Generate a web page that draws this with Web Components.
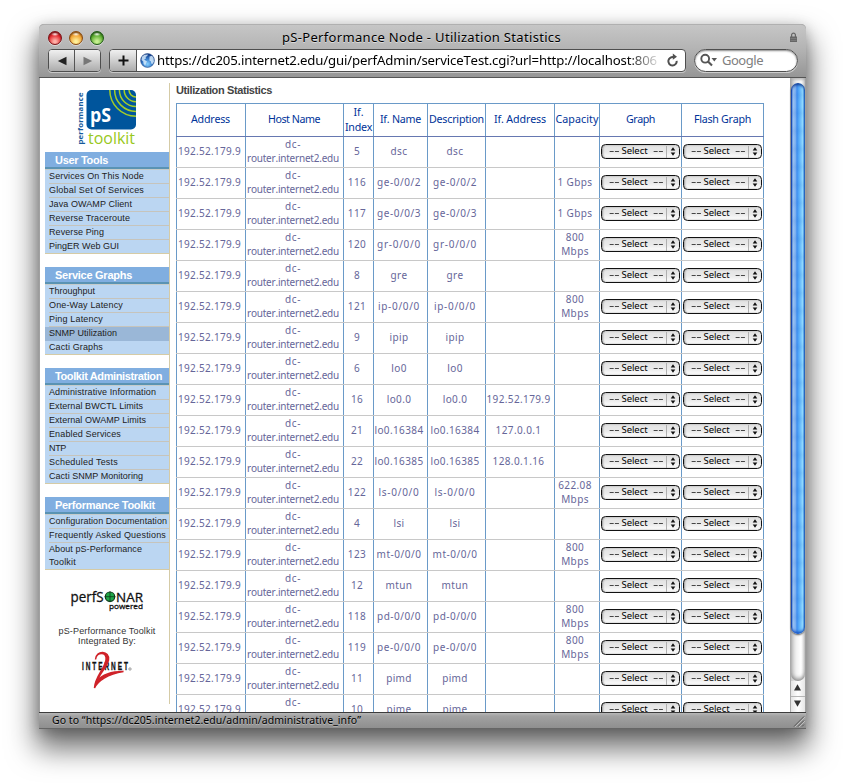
<!DOCTYPE html>
<html lang="en">
<head>
<meta charset="utf-8">
<title>pS-Performance Node - Utilization Statistics</title>
<style>
html,body{margin:0;height:783px;overflow:hidden;background:#fff}
body{box-sizing:border-box;padding:24px 0 0 39px;font-family:"Noto Sans","Open Sans",sans-serif;font-kerning:none}
</style>
</head>
<body>
<mac-window>
  <browser-chrome slot="chrome"></browser-chrome>
  <side-bar slot="page"></side-bar>
  <stat-table slot="page"></stat-table>
  <mac-scrollbar slot="scroll"></mac-scrollbar>
  <status-line slot="status"></status-line>
</mac-window>
<script>
class Base extends HTMLElement{
  constructor(){super();this.attachShadow({mode:'open'});}
  connectedCallback(){if(!this.done){this.done=true;this.shadowRoot.innerHTML=this.view();this.ready();}}
  view(){return '';}
  ready(){}
}
const def=(n,c)=>customElements.define(n,c);

def('mac-window',class extends Base{
  view(){return `<style>
  :host{display:flex;flex-direction:column;box-sizing:border-box;width:767px;height:705px;border-radius:5px 5px 0 0;background:#a0a0a0;
    box-shadow:0 17px 29px 3px rgba(0,0,0,.56),0 3px 13px rgba(0,0,0,.22)}
  .mid{display:flex;height:634px;margin:0 1px;background:#fff;overflow:hidden}
  .page{display:flex;align-items:flex-start;width:750px;overflow:hidden}
  </style><slot name="chrome"></slot><div class="mid"><div class="page"><slot name="page"></slot></div><slot name="scroll"></slot></div><slot name="status"></slot>`;}
});

def('traffic-light',class extends Base{
  view(){const [a,b,c]=this.getAttribute('tones').split(' ');return `<style>
  :host{display:block;width:14px;height:14px;box-sizing:border-box;border-radius:50%;border:1px solid ${c};
  background:radial-gradient(ellipse 4px 2px at 50% 18%,rgba(255,255,255,.95),rgba(255,255,255,0)),radial-gradient(circle at 50% 80%,${a} 10%,${b} 60%,${c} 105%);
  box-shadow:0 1px 0 rgba(255,255,255,.5),inset 0 1px 1px rgba(0,0,0,.35)}</style>`;}
});

def('browser-chrome',class extends Base{
  view(){return `<style>
  :host{display:block;box-sizing:border-box;height:54px;border-bottom:1px solid #555;border-top:1px solid #b0b0b0;border-radius:5px 5px 0 0;
    background:linear-gradient(#c6c6c6,#b4b4b4 45%,#969696)}
  .title{display:grid;grid-template-columns:243px 1fr 28px;align-items:center;height:24px}
  .lights{display:flex;gap:7px;padding-left:9px;margin-top:-2px}
  .title fit-text{font-size:13px;line-height:20px;color:#000;text-shadow:0 1px 0 rgba(255,255,255,.5);margin-bottom:5px}
  .bar{display:flex;align-items:flex-start;padding-left:9px;height:24px}
  .box{box-sizing:border-box;height:23px;border:1px solid #4e4e4e;display:flex;overflow:hidden;background:#fff;box-shadow:0 1px 0 rgba(255,255,255,.45)}
  .nav{width:53px;border-radius:4px;margin-right:8px}
  .b{flex:1;background:linear-gradient(#f0f0f0,#cfcfcf 50%,#acacac);display:flex;align-items:center;justify-content:center}
  .b+.b{border-left:1px solid #555}
  .url{width:577px;border-radius:4px;margin-right:8px}
  .plus{flex:0 0 26px;border-right:1px solid #555}
  .globe{margin:3px 0 0 3px;width:15px;flex:none}
  .addr{margin-left:2px;width:500px;overflow:hidden;font-size:13.200px;line-height:20px;color:#000;-webkit-mask-image:linear-gradient(90deg,#000 470px,rgba(0,0,0,.15) 500px)}
  .rel{margin:3px 0 0 9px}
  .search{width:104px;border-radius:12px;box-shadow:inset 0 1px 2px #888,0 1px 0 rgba(255,255,255,.5);color:#808080;font-size:13px;line-height:20px}
  .search svg{margin:3px 4px 0 5px;flex:none}
  </style>
  <div class="title"><div class="lights">
   <traffic-light tones="#ffb0a8 #e0262c #7c1216"></traffic-light><traffic-light tones="#fff09a #f0a030 #8a4a10"></traffic-light><traffic-light tones="#c6f090 #58a82c #1f5a14"></traffic-light></div>
   <div><fit-text w="279">pS-Performance Node - Utilization Statistics</fit-text></div>
   <svg width="10" height="12" viewBox="0 0 10 12" style="margin:-3px 0 0 11px"><path d="M2.600 6V3.600a2 2 0 0 1 3.800 0V6" fill="none" stroke="#666" stroke-width="1.200"/><rect x="1" y="5.500" width="7" height="5.500" fill="#666"/><path d="M1.500 7.500h6M1.500 9.500h6" stroke="#888" stroke-width=".6"/></svg></div>
  <div class="bar">
   <div class="box nav"><div class="b"><svg width="10" height="10"><path d="M9.500.7v8.600L.8 5z" fill="#222"/></svg></div><div class="b"><svg width="10" height="10"><path d="M.5.7v8.600L9.200 5z" fill="#777"/></svg></div></div>
   <div class="box url"><div class="b plus"><svg width="11" height="11"><path d="M5.500.5v10M.5 5.500h10" stroke="#111" stroke-width="2"/></svg></div>
    <svg class="globe" width="15" height="15" viewBox="0 0 15 15"><defs><radialGradient id="g" cx=".5" cy=".75" r=".7"><stop offset="0" stop-color="#86d0ff"/><stop offset=".55" stop-color="#3478c8"/><stop offset="1" stop-color="#123a86"/></radialGradient></defs><circle cx="7.500" cy="7.500" r="6.900" fill="url(#g)" stroke="#2c4f88" stroke-width=".6"/><path d="M2 3.800 4.500 1.800 8 1.500 7.200 3 5.500 4 6.200 5.200 4.200 6.500 5.500 7.500 7 8.500 6 10.500 5.200 12.800 3.500 10.500 3.300 8.500 1.500 7zM9.500 3.500l2.500-.8 1.600 2.500.3 3.500-1.500 2.200-1.200-.5-.2-2-1.600-1z" fill="#d5eafa" opacity=".85"/></svg>
    <div class="addr"><fit-text w="500">https://dc205.internet2.edu/gui/perfAdmin/serviceTest.cgi?url=http://localhost:806</fit-text></div>
    <svg class="rel" width="13" height="15" viewBox="0 0 13 15"><path d="M8 4.300A4.200 4.200 0 1 0 10.700 7.800" fill="none" stroke="#505050" stroke-width="2"/><path d="M6.800.6 11 3.700 6.800 6.800z" fill="#505050"/></svg></div>
   <div class="box search"><svg width="18" height="15" viewBox="0 0 18 15"><circle cx="5.200" cy="5.700" r="3.900" fill="none" stroke="#555" stroke-width="1.900"/><path d="m8 8.500 4 4" stroke="#555" stroke-width="2.200"/><path d="M11.500 5H17l-2.700 3.600z" fill="#555"/></svg><fit-text w="41">Google</fit-text></div>
  </div>`;}
});

def('status-line',class extends Base{
  view(){return `<style>:host{display:flex;justify-content:space-between;box-sizing:border-box;height:17px;padding-left:13px;border-top:1px solid #3c3c3c;border-bottom:1px solid #666;background:linear-gradient(#b8b8b8,#a2a2a2 3px,#8f8f8f);font-size:10.500px;line-height:14px;color:#000;text-shadow:0 1px 0 rgba(255,255,255,.35)}svg{margin:2px 1px 0 0}</style>
  <div><fit-text w="309">Go to “https://dc205.internet2.edu/admin/administrative_info”</fit-text></div><svg width="12" height="12"><path d="M1 11.500 11 1.500M5 11.500l6-6M9 11.500l2-2" stroke="#555"/><path d="M2 12 12 2M6 12l6-6" stroke="#d0d0d0" stroke-width=".7"/></svg>`;}
});

def('mac-scrollbar',class extends Base{
  view(){return `<style>
  :host{display:flex;flex-direction:column;box-sizing:border-box;width:15px;height:634px;border-left:1px solid #aaa;background:linear-gradient(90deg,#c8c8c8,#f2f2f2 40%,#fff 70%,#e2e2e2)}
  .well{height:603px;box-sizing:border-box;padding-top:5px;border-radius:0 0 7px 7px;box-shadow:inset 0 -3px 4px -1px #888,inset 0 2px 3px #bbb}
  .thumb{height:551px;border-radius:7px;background:
   repeating-linear-gradient(rgba(0,50,160,0) 0 6px,rgba(20,90,200,.09) 12px,rgba(0,50,160,0) 18px),
   linear-gradient(90deg,#1440a8 0,#2a62d0 8%,#a2c6f2 12%,#78aef0 34%,#3f8ef0 42%,#5cb2fb 60%,#93dafe 84%,#4a98e2 93%,#164ea8 100%);
   box-shadow:inset 0 3px 3px -1px #103890,inset 0 -3px 3px -1px #1450c0,0 1px 2px #555}
  .a{flex:1;display:flex;align-items:center;justify-content:center;background:linear-gradient(90deg,#e4e4e4,#fff 50%,#e6e6e6)}.a+.a{border-top:1px solid #b5b5b5}.a svg{margin-bottom:2px}
  </style><div class="well"><div class="thumb"></div></div><div class="a"><svg width="8" height="7"><path d="M0 6.500 3.500.3 7 6.500z" fill="#333"/></svg></div><div class="a"><svg width="8" height="7"><path d="M0 .5 3.500 6.700 7 .5z" fill="#333"/></svg></div>`;}
});

def('nav-item',class extends Base{
  view(){return `<style>:host{display:block;box-sizing:border-box;height:14px;padding-left:4px;background:#bbd6f2;font:9px/12px "Liberation Sans",Arial,sans-serif;color:#222}
  div{height:13px;border-bottom:1px solid #c6c4bc;white-space:nowrap}
  :host([on]){background:#9ab7d7}:host([on]) div{border-color:#9ab7d7}
  :host([tall]){height:27px}:host([tall]) div{height:26px;line-height:13px}
  </style><div><slot></slot></div>`;}
});
def('nav-group',class extends Base{
  view(){return `<style>:host{display:block;box-sizing:border-box;margin-bottom:13px;position:relative}
  h2{margin:0;box-sizing:border-box;height:18px;padding-left:10px;background:#80aee0;border-bottom:1px solid #c5cccb;box-shadow:inset 0 -2px 0 #5a93b3;font:bold 11px/17px "Liberation Sans",Arial,sans-serif;color:#fff}
  i{position:absolute;left:0;right:0;bottom:0;height:1px;background:#d5cba6}
  </style><h2><fit-text w="${this.getAttribute('w')}">${this.getAttribute('label')}</fit-text></h2><slot></slot><i></i>`;}
});

def('ps-logo',class extends Base{
  view(){return `<style>:host{display:block;height:62px}svg{display:block}text{font-family:"Open Sans","Noto Sans",sans-serif}</style>
  <svg width="124" height="62" viewBox="45 90 124 62"><defs><clipPath id="c"><rect x="86.500" y="90" width="49.500" height="39.500" rx="5"/></clipPath></defs>
  <rect x="86.500" y="90" width="49.500" height="39.500" rx="5" fill="#00559c"/>
  <g clip-path="url(#c)" fill="none" stroke="#a3cc28" stroke-width="1.500"><circle cx="136" cy="90" r="7"/><circle cx="136" cy="90" r="11.800"/><circle cx="136" cy="90" r="16.600"/><circle cx="136" cy="90" r="21.400"/><circle cx="136" cy="90" r="26.200"/></g>
  <text x="90" y="121.500" font-size="19" font-weight="700" fill="#fff" textLength="21" lengthAdjust="spacingAndGlyphs">pS</text>
  <text x="88" y="144" font-size="15.500" fill="#98c820" textLength="47" lengthAdjust="spacingAndGlyphs">toolkit</text>
  <text transform="translate(83 144.500) rotate(-90)" font-size="7.800" font-weight="700" fill="#165a9c" textLength="52">performance</text></svg>`;}
});

def('partner-logos',class extends Base{
  view(){return `<style>:host{display:block;color:#333;font:9px/10px "Liberation Sans",Arial,sans-serif;text-align:center}svg{display:block}p{margin:0}</style>
  <svg width="124" height="43" viewBox="45 583 124 43"><g font-family="Open Sans, Noto Sans, sans-serif" fill="#111" stroke="#111" stroke-width=".3"><text x="70.500" y="602" font-size="14" textLength="33" lengthAdjust="spacingAndGlyphs">perfS</text><text x="116" y="602" font-size="13.500" textLength="27" lengthAdjust="spacingAndGlyphs">NAR</text><text x="109" y="609" font-size="8" textLength="34" lengthAdjust="spacingAndGlyphs">powered</text></g>
  <circle cx="110" cy="596.700" r="4.700" fill="#20a848" stroke="#0c3a1a" stroke-width="1.200"/><path d="M104.500 596.700h11M110 591.200v11" stroke="#0c3a1a" stroke-width=".8"/></svg>
  <p><fit-text w="97">pS-Performance Toolkit</fit-text></p><p><fit-text w="58">Integrated By:</fit-text></p>
  <svg width="124" height="48" viewBox="45 646 124 48"><text transform="translate(82 670) scale(.62 1)" font-family="Liberation Sans,sans-serif" font-weight="700" font-size="10.500" fill="#111" stroke="#111" stroke-width=".3" textLength="74">INTERNET</text>
  <path d="M95.500 659.500c1-8 12-8.500 10.500.5-1.500 9-11 17-11.500 28 3-7 13-14 29-16.500-13 0-22 4-26.500 9.500 3-8 10-14 11.500-21 1.500-9.500-12.500-10.500-13-.5z" fill="#cf2229" stroke="#cf2229" stroke-width="1.500"/>
  <circle cx="130" cy="669" r="1.200" fill="none" stroke="#444" stroke-width=".5"/></svg>`;}
});

const groups=[
 ['User Tools',53,[['Services On This Node',95],['Global Set Of Services',95],['Java OWAMP Client',83],['Reverse Traceroute',81],['Reverse Ping',55],['PingER Web GUI',70]]],
 ['Service Graphs',77,[['Throughput',46],['One-Way Latency',74],['Ping Latency',54],['SNMP Utilization',68,'on'],['Cacti Graphs',54]]],
 ['Toolkit Administration',107,[['Administrative Information',107],['External BWCTL Limits',94],['External OWAMP Limits',97],['Enabled Services',72],['NTP',17],['Scheduled Tests',69],['Cacti SNMP Monitoring',94]]],
 ['Performance Toolkit',100,[['Configuration Documentation',118],['Frequently Asked Questions',117],['About pS-Performance|Toolkit',93,'tall']]]
];
def('side-bar',class extends Base{
  view(){return `<style>:host{display:block;box-sizing:border-box;width:125px;height:621px;margin:5px 0 0 5px;padding-top:7px;border-right:1px solid #d5cba6}</style>
  <ps-logo></ps-logo>${groups.map(([l,w,it])=>`<nav-group label="${l}" w="${w}">${it.map(([t,iw,f])=>{const p=t.split('|');return `<nav-item ${f||''}><fit-text w="${iw}">${p[0]}</fit-text>${p[1]?`<br><fit-text w="27">${p[1]}</fit-text>`:''}</nav-item>`;}).join('')}</nav-group>`).join('')}
  <partner-logos></partner-logos>`;}
});

def('mac-select',class extends Base{
  view(){return `<style>:host{display:flex;align-items:center;box-sizing:border-box;width:79px;height:15px;border:1px solid #111;border-radius:4.500px;background:linear-gradient(#e2e2e2,#eaeaea 55%,#fff);box-shadow:inset 1px 0 2px #999;color:#000;font-size:9.500px;line-height:12px;padding-left:5px;letter-spacing:0}
  .d{width:1px;height:12px;background:#b0b0b0;margin:0 3px 0 4px}
  .t{display:flex;justify-content:space-between;width:55px;margin-top:-1px}
  .w{width:11px;white-space:nowrap}.w b{display:inline-block;font-weight:400;transform:scaleX(1.75);transform-origin:0 50%}</style><span class="t"><span class="w"><b>--</b></span><fit-text w="26">Select</fit-text><span class="w"><b>--</b></span></span><span class="d"></span><svg width="6" height="9"><path d="M3 .3 5.300 3.500H.7zM3 8.700.7 5.500h4.600z" fill="#111"/></svg>`;}
});

const rows=[['5','dsc'],['116','ge-0/0/2','','1 Gbps'],['117','ge-0/0/3','','1 Gbps'],['120','gr-0/0/0','','800<br>Mbps'],['8','gre'],['121','ip-0/0/0','','800<br>Mbps'],['9','ipip'],['6','lo0'],['16','lo0.0','192.52.179.9'],['21','lo0.16384','127.0.0.1'],['22','lo0.16385','128.0.1.16'],['122','ls-0/0/0','','622.08<br>Mbps'],['4','lsi'],['123','mt-0/0/0','','800<br>Mbps'],['12','mtun'],['118','pd-0/0/0','','800<br>Mbps'],['119','pe-0/0/0','','800<br>Mbps'],['11','pimd'],['10','pime']];
const nameWidth={g:44,i:42,l:41,m:45,p:44};
const ifName=t=>t.includes('-')?`<fit-text w="${nameWidth[t[0]]}">${t}</fit-text>`:t;
def('stat-table',class extends Base{
  view(){
    const heads=[['Address',39],['Host Name',52],['If.',10,'Index',27],['If. Name',41],['Description',55],['If. Address',52],['Capacity',43],['Graph',29],['Flash Graph',57]];
    return `<style>:host{display:block;margin:5px 0 0 6px;width:588px}
    h1{margin:0;height:20px;font:bold 11px/15px "Liberation Sans",Arial,sans-serif;color:#444}
    .r{display:grid;grid-template-columns:69px 98px 30px 54px 58px 69px 45px 82px 83px;box-sizing:border-box;height:31px;border-bottom:1px solid #c8c8c8;font-size:10px;line-height:14px;letter-spacing:.38px;color:#666699}
    .r>div{display:flex;align-items:center;justify-content:center;text-align:center;border-left:1px solid #6a9ac8;min-width:0;white-space:nowrap;box-sizing:border-box;padding:0 3px 2px 0}
    .r>div.s{padding:0 0 1px}
    .r>div:nth-child(7){padding-right:4px}
    .r>div:last-child{border-right:1px solid #6a9ac8}
    .h{height:34px;border-top:1px solid #6a9ac8;border-bottom-color:#6678b1;color:#003399;font-size:10.700px;letter-spacing:0;line-height:15px}
    .h.h>div:nth-child(n){padding:0 0 1px}.h.h>div:nth-child(1),.h.h>div:nth-child(2){padding-right:1px}
    </style><h1><fit-text w="96">Utilization Statistics</fit-text></h1>
    <div class="r h">${heads.map(h=>`<div><span><fit-text w="${h[1]}">${h[0]}</fit-text>${h[2]?`<br><fit-text w="${h[3]}">${h[2]}</fit-text>`:''}</span></div>`).join('')}</div>
    ${rows.map(r=>`<div class="r"><div><fit-text w="63">192.52.179.9</fit-text></div><div><span><fit-text w="16">dc-</fit-text><br><fit-text w="92">router.internet2.edu</fit-text></span></div><div>${r[0]}</div><div>${ifName(r[1])}</div><div>${ifName(r[1])}</div><div>${r[2]||''}</div><div><span>${r[3]||''}</span></div><div class="s"><mac-select></mac-select></div><div class="s"><mac-select></mac-select></div></div>`).join('')}`;
  }
});

/* Text spaced to fill a given width. Defined last, so that it is measured in its final font. */
def('fit-text',class extends Base{
  view(){return `<style>:host{display:inline-block;white-space:nowrap;flex:none}span{display:inline-block}</style><span><slot></slot></span>`;}
  ready(){
    const w=+this.getAttribute('w'),s=this.shadowRoot.querySelector('span');
    s.style.letterSpacing='0px';
    const d=(w-s.getBoundingClientRect().width)/this.textContent.length;
    s.style.letterSpacing=d.toFixed(3)+'px';
    this.style.width=w+'px';
  }
});
</script>
</body>
</html>
